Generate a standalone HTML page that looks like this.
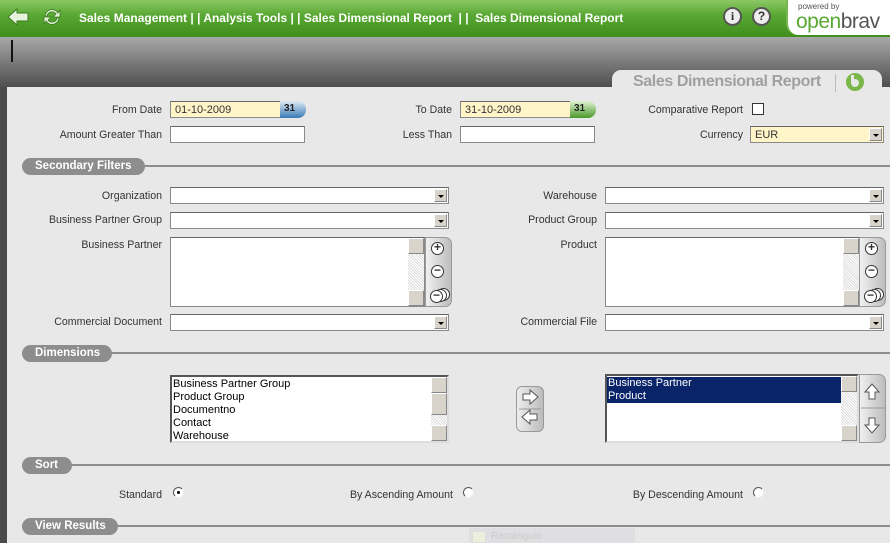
<!DOCTYPE html>
<html><head><meta charset="utf-8"><style>
*{margin:0;padding:0;box-sizing:border-box}
body{width:890px;height:543px;overflow:hidden;position:relative;background:#e8e8e8;font-family:"Liberation Sans",sans-serif;font-size:11px;color:#333}
.a{position:absolute}
.lbl{position:absolute;text-align:right;white-space:nowrap;font-size:10.6px}
.in{position:absolute;background:#fff;border:1px solid #8a8a8a;border-top-color:#666;height:17px}
.y{background:#fff5c8}
.dd{position:absolute;right:1px;top:1px;width:13px;height:13px;background:#d8d4cc;border:1px solid #888;border-top-color:#fff;border-left-color:#fff}
.dd:after{content:"";position:absolute;left:3px;top:5px;border:3px solid transparent;border-top:3px solid #000;border-bottom:0}
.pill{position:absolute;left:22px;height:17px;background:#8d8d8d;border-radius:9px;color:#fff;font-weight:bold;font-size:11.5px;line-height:17px;padding-left:13px}
.line{position:absolute;right:0;height:2px;background:#8d8d8d}
.sb{position:absolute;right:0;top:0;bottom:0;width:16px;background:repeating-linear-gradient(45deg,#ddd 0 1px,#fff 1px 2px)}
.sbb{position:absolute;left:0;width:16px;height:16px;background:#d8d4cc;border:1px solid #888;border-top-color:#fff;border-left-color:#fff}
.btns{position:absolute;background:linear-gradient(90deg,#f0f0f0,#bdbdbd);border:1px solid #999;border-radius:0 7px 7px 0}
.circ{position:absolute;width:13px;height:13px;border:1.5px solid #333;border-radius:50%;background:#fff;font-size:12px;line-height:9px;text-align:center;font-weight:bold}
.radio{position:absolute;width:11px;height:11px;border-radius:50%;background:#fff;border:1px solid #555;border-right-color:#eee;border-bottom-color:#eee}
.opt{line-height:13px;padding-left:1px;color:#000}
</style></head><body>
<div class="a" style="left:0;top:0;width:890px;height:37px;background:linear-gradient(#8cc865,#5aa834 40%,#3f8e1c)"></div>
<svg class="a" style="left:6px;top:6px" width="24" height="22"><path d="M2 11 L11 3 L11 7 L22 7 L22 15 L11 15 L11 19 Z" fill="#e6f2dc" stroke="#3a7a20" stroke-width="1"/></svg>
<svg class="a" style="left:41px;top:6px" width="22" height="22"><path d="M4 10 A7 7 0 0 1 17 7 L19 4 L19 11 L12 11 L15 8 A5 5 0 0 0 6 10Z M18 12 A7 7 0 0 1 5 15 L3 18 L3 11 L10 11 L7 14 A5 5 0 0 0 16 12Z" fill="#e6f2dc" stroke="#3a7a20" stroke-width=".8"/></svg>
<div class="a" style="left:79px;top:11px;color:#fff;font-weight:bold;font-size:12px;letter-spacing:0;white-space:nowrap">Sales Management | | Analysis Tools | | Sales Dimensional Report &nbsp;| | &nbsp;Sales Dimensional Report</div>
<div class="a" style="left:723px;top:7px;width:19px;height:19px;border-radius:50%;background:#eee;border:2px solid #555;font:bold 12px 'Liberation Serif',serif;text-align:center;line-height:15px;color:#333">i</div>
<div class="a" style="left:752px;top:7px;width:19px;height:19px;border-radius:50%;background:#eee;border:2px solid #555;font:bold 12px 'Liberation Sans',sans-serif;text-align:center;line-height:15px;color:#333">?</div>
<div class="a" style="left:786px;top:0;width:104px;height:35px;background:#fff;border-radius:0 0 0 12px;border-left:2px solid #7ab650"></div>
<div class="a" style="left:798px;top:2px;font-size:8px;color:#555">powered by</div>
<div class="a" style="left:796px;top:10px;font-size:21px;color:#555;letter-spacing:-0.5px"><span style="color:#5aa834">open</span>brav</div>
<div class="a" style="left:0;top:37px;width:890px;height:50px;background:linear-gradient(#a8a8a8,#4e4e4e)"></div>
<div class="a" style="left:11px;top:40px;width:2px;height:22px;background:#111"></div>
<div class="a" style="left:612px;top:70px;width:270px;height:20px;background:#e8e8e8;border-radius:9px 9px 0 0"></div>
<div class="a" style="left:633px;top:73px;font-size:16px;font-weight:bold;color:#a0a0a0;letter-spacing:-0.4px;white-space:nowrap">Sales Dimensional Report</div>
<div class="a" style="left:835px;top:74px;width:1px;height:18px;background:#bbb"></div>
<div class="a" style="left:846px;top:73px;width:18px;height:18px;border-radius:50%;background:#7ab648"></div>
<div class="a" style="left:851px;top:79px;width:8px;height:8px;border-radius:50%;background:#e8e8e8"></div>
<div class="a" style="left:851px;top:75px;width:3px;height:8px;background:#e8e8e8"></div>
<div class="a" style="left:0;top:87px;width:7px;height:456px;background:#4a4a4a"></div>
<div class="lbl" style="right:728px;top:104px">From Date</div>
<div class="in y" style="left:170px;top:101px;width:111px"><span class="a" style="left:4px;top:2px">01-10-2009</span></div>
<div class="a" style="left:280px;top:101px;width:26px;height:17px;background:linear-gradient(#e0eaf2,#3a7ab8);border-radius:0 8px 8px 0;font-size:10px;font-weight:bold;color:#222;padding-left:4px;line-height:15px">31</div>
<div class="lbl" style="right:438px;top:104px">To Date</div>
<div class="in y" style="left:460px;top:101px;width:111px"><span class="a" style="left:4px;top:2px">31-10-2009</span></div>
<div class="a" style="left:570px;top:101px;width:26px;height:17px;background:linear-gradient(#e2f2d4,#4a9a28);border-radius:0 8px 8px 0;font-size:10px;font-weight:bold;color:#222;padding-left:4px;line-height:15px">31</div>
<div class="lbl" style="right:147px;top:104px">Comparative Report</div>
<div class="a" style="left:752px;top:103px;width:12px;height:12px;background:#fff;border:1px solid #333"></div>
<div class="lbl" style="right:728px;top:129px">Amount Greater Than</div>
<div class="in" style="left:170px;top:126px;width:135px"></div>
<div class="lbl" style="right:438px;top:129px">Less Than</div>
<div class="in" style="left:460px;top:126px;width:135px"></div>
<div class="lbl" style="right:147px;top:129px">Currency</div>
<div class="in y" style="left:750px;top:126px;width:134px"><span class="a" style="left:4px;top:2px">EUR</span><div class="dd"></div></div>
<div class="line" style="left:140px;top:165px"></div>
<div class="pill" style="top:158px;width:123px">Secondary Filters</div>
<div class="lbl" style="right:728px;top:190px">Organization</div>
<div class="in" style="left:170px;top:187px;width:279px"><div class="dd"></div></div>
<div class="lbl" style="right:293px;top:190px">Warehouse</div>
<div class="in" style="left:605px;top:187px;width:279px"><div class="dd"></div></div>
<div class="lbl" style="right:728px;top:214px">Business Partner Group</div>
<div class="in" style="left:170px;top:212px;width:279px"><div class="dd"></div></div>
<div class="lbl" style="right:293px;top:214px">Product Group</div>
<div class="in" style="left:605px;top:212px;width:279px"><div class="dd"></div></div>
<div class="lbl" style="right:728px;top:239px">Business Partner</div>
<div class="in" style="left:170px;top:237px;width:255px;height:70px"><div class="sb"><div class="sbb" style="top:0"></div><div class="sbb" style="bottom:0"></div></div></div>
<div class="btns" style="left:425px;top:237px;width:27px;height:70px"><div class="circ" style="left:5px;top:4px">+</div><div class="circ" style="left:5px;top:27px">−</div><div class="circ" style="left:11px;top:50px"></div><div class="circ" style="left:8px;top:51px"></div><div class="circ" style="left:4px;top:52px;line-height:9px">−</div></div>
<div class="lbl" style="right:293px;top:239px">Product</div>
<div class="in" style="left:605px;top:237px;width:255px;height:70px"><div class="sb"><div class="sbb" style="top:0"></div><div class="sbb" style="bottom:0"></div></div></div>
<div class="btns" style="left:859px;top:237px;width:27px;height:70px"><div class="circ" style="left:5px;top:4px">+</div><div class="circ" style="left:5px;top:27px">−</div><div class="circ" style="left:11px;top:50px"></div><div class="circ" style="left:8px;top:51px"></div><div class="circ" style="left:4px;top:52px">−</div></div>
<div class="lbl" style="right:728px;top:316px">Commercial Document</div>
<div class="in" style="left:170px;top:314px;width:279px"><div class="dd"></div></div>
<div class="lbl" style="right:293px;top:316px">Commercial File</div>
<div class="in" style="left:605px;top:314px;width:279px"><div class="dd"></div></div>
<div class="line" style="left:108px;top:352px"></div>
<div class="pill" style="top:345px;width:90px">Dimensions</div>
<div class="in" style="left:170px;top:375px;width:279px;height:68px;border:2px solid #555;border-right-color:#ddd;border-bottom-color:#ddd;padding-top:1px">
<div class="opt">Business Partner Group</div><div class="opt">Product Group</div><div class="opt">Documentno</div><div class="opt">Contact</div><div class="opt">Warehouse</div>
<div class="sb"><div class="sbb" style="top:0"></div><div class="sbb" style="top:16px;height:22px"></div><div class="sbb" style="bottom:0"></div></div></div>
<div class="a" style="left:516px;top:386px;width:28px;height:46px;background:linear-gradient(90deg,#eee,#bbb);border:1px solid #999;border-radius:6px"></div>
<svg class="a" style="left:516px;top:386px" width="28" height="46"><path d="M7 8h7v-4l8 7-8 7v-4h-7z M21 28h-7v-4l-8 7 8 7v-4h7z" fill="#fff" stroke="#555"/><line x1="3" y1="23" x2="25" y2="23" stroke="#999"/></svg>
<div class="in" style="left:605px;top:374px;width:254px;height:69px;border:2px solid #555;border-right-color:#ddd;border-bottom-color:#ddd;padding-top:1px">
<div class="opt" style="background:#0a246a;color:#fff;margin-right:16px">Business Partner</div><div class="opt" style="background:#0a246a;color:#fff;margin-right:16px">Product</div>
<div class="sb"><div class="sbb" style="top:0"></div><div class="sbb" style="bottom:0"></div></div></div>
<div class="btns" style="left:859px;top:374px;width:27px;height:69px"></div>
<svg class="a" style="left:859px;top:374px" width="27" height="69"><path d="M6 18l7-8 7 8h-4v7h-6v-7z M6 51l7 8 7-8h-4v-7h-6v7z" fill="#fff" stroke="#555"/><line x1="2" y1="34" x2="26" y2="34" stroke="#999"/></svg>
<div class="line" style="left:66px;top:464px"></div>
<div class="pill" style="top:457px;width:50px">Sort</div>
<div class="lbl" style="right:728px;top:489px">Standard</div>
<div class="radio" style="left:173px;top:487px"><div class="a" style="left:3px;top:3px;width:3px;height:3px;background:#000;border-radius:50%"></div></div>
<div class="lbl" style="right:437px;top:489px">By Ascending Amount</div>
<div class="radio" style="left:463px;top:487px"></div>
<div class="lbl" style="right:147px;top:489px">By Descending Amount</div>
<div class="radio" style="left:753px;top:487px"></div>
<div class="line" style="left:114px;top:525px"></div>
<div class="pill" style="top:518px;width:96px">View Results</div>
<div class="a" style="left:469px;top:528px;width:166px;height:15px;background:#dfdfe2"></div>
<div class="a" style="left:472px;top:531px;width:14px;height:12px;background:#eeeedd;border:1px solid #ddd"></div>
<div class="a" style="left:491px;top:531px;color:#ccc;font-size:10px">Rectángulo</div>
</body></html>
